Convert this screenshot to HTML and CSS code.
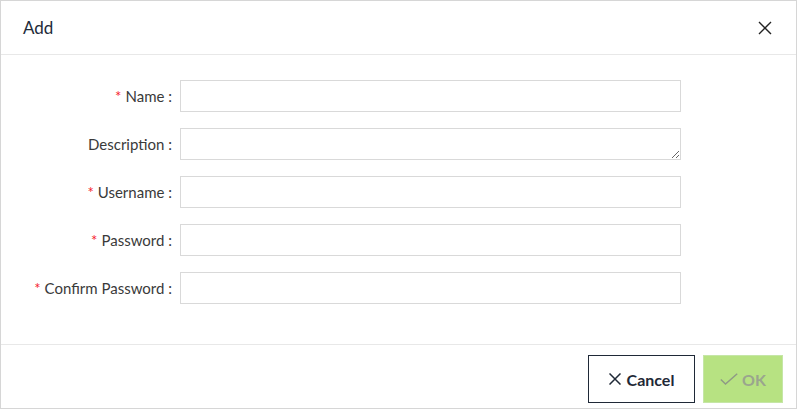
FILE: index.html
```html
<!DOCTYPE html>
<html>
<head>
<meta charset="utf-8">
<link rel="stylesheet" href="styles.css">
</head>
<body>
<div class="dialog">
  <div class="header">
    <div class="title">Add</div>
    <button class="close" aria-label="Close">
      <svg width="14" height="14" viewBox="0 0 14 14"><path d="M1 1L13 13M13 1L1 13" stroke="#222" stroke-width="1.4" fill="none"/></svg>
    </button>
  </div>
  <form class="body">
    <label class="label"><span class="req">*</span>Name :</label>
    <input class="field" type="text">
    <label class="label">Description :</label>
    <textarea class="field area"></textarea>
    <label class="label"><span class="req">*</span>Username :</label>
    <input class="field" type="text">
    <label class="label"><span class="req">*</span>Password :</label>
    <input class="field" type="password">
    <label class="label"><span class="req">*</span>Confirm Password :</label>
    <input class="field" type="password">
  </form>
  <div class="footer">
    <button class="btn cancel">
      <svg width="12" height="12" viewBox="0 0 12 12"><path d="M0.5 0.5L11.5 11.5M11.5 0.5L0.5 11.5" stroke="#1f2937" stroke-width="1.5" fill="none"/></svg>
      <span>Cancel</span>
    </button>
    <button class="btn ok" disabled>
      <svg width="18" height="12" viewBox="0 0 18 12"><path d="M0.8 6.5L5.5 11L17.2 0.8" stroke="#8f9a86" stroke-width="1.5" fill="none"/></svg>
      <span>OK</span>
    </button>
  </div>
</div>
</body>
</html>
```
FILE: styles.css
```css
* { box-sizing: border-box; }
html, body { margin: 0; padding: 0; background: #fff; }
body { font-family: Lato, "Noto Sans", sans-serif; }
.dialog {
  width: 797px;
  height: 409px;
  border: 1px solid #d6d6d6;
  display: flex;
  flex-direction: column;
}
.header {
  height: 54px;
  border-bottom: 1px solid #e8e8e8;
  display: flex;
  align-items: center;
  justify-content: space-between;
  padding: 0 23px 0 22px;
  flex: none;
}
.title { font-size: 17px; color: #222b3a; }
.close {
  border: 0; background: none; padding: 0; width: 16px; height: 16px;
  display: flex; align-items: center; justify-content: center;
}
.body {
  margin: 0;
  padding: 25px 0 40px 0;
  display: grid;
  grid-template-columns: 171px 501px;
  column-gap: 8px;
  row-gap: 16px;
  border-bottom: 1px solid #e8e8e8;
  flex: none;
}
.label {
  font-size: 15px;
  color: #3a3a3a;
  text-align: right;
  line-height: 32px;
  height: 32px;
}
.req { color: #f5222d; margin-right: 4px; }
.field {
  height: 32px;
  border: 1px solid #d9d9d9;
  border-radius: 0;
  margin: 0;
  font: inherit;
  display: block;
  width: 501px;
}
.area { resize: vertical; }
.footer {
  flex: 1;
  display: flex;
  justify-content: flex-end;
  align-items: flex-start;
  gap: 8px;
  padding: 10px 13px 0 0;
}
.btn {
  height: 48px;
  display: flex;
  align-items: center;
  justify-content: center;
  gap: 6px;
  font-family: inherit;
  font-size: 16px;
  font-weight: 700;
  padding: 0;
}
.cancel {
  width: 107px;
  border: 1px solid #1f2937;
  background: #fff;
  color: #1f2937;
}
.ok {
  width: 80px;
  border: 1px solid #c5e6a6;
  background: #b7e282;
  color: #9aa58e;
  gap: 4px;
}
```
